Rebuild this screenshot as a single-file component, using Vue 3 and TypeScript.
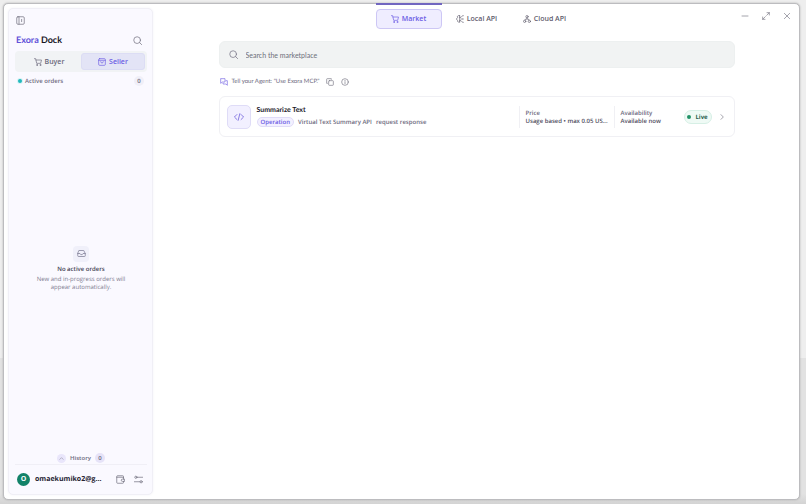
<script setup lang="ts">
import { ref } from 'vue'

type Role = 'buyer' | 'seller'
type Section = 'market' | 'local' | 'cloud'

interface Listing {
  name: string
  kind: string
  provider: string
  mode: string
  price: string
  availability: string
  status: string
}

const role = ref<Role>('seller')
const section = ref<Section>('market')
const query = ref('')

const listings: Listing[] = [
  {
    name: 'Summarize Text',
    kind: 'Operation',
    provider: 'Virtual Text Summary API',
    mode: 'request response',
    price: 'Usage based • max 0.05 US...',
    availability: 'Available now',
    status: 'Live',
  },
]
</script>

<template>
  <div class="desktop">
    <div class="window">
      <aside class="sidebar">
        <button class="icon-btn collapse" type="button" aria-label="Collapse sidebar">
          <svg class="i9" viewBox="0 0 24 24"><rect x="2" y="2" width="20" height="20" rx="3" /><path d="M8 2v20M15 9v6" /></svg>
        </button>

        <div class="brand">
          <h1><span>Exora</span> Dock</h1>
          <button class="icon-btn" type="button" aria-label="Search orders">
            <svg class="i9" viewBox="0 0 24 24"><circle cx="11" cy="11" r="9" /><path d="m18 18 5 5" /></svg>
          </button>
        </div>

        <div class="roles">
          <button type="button" :class="{ active: role === 'buyer' }" @click="role = 'buyer'">
            <svg class="i8" viewBox="0 0 24 24"><circle cx="9" cy="21" r="1.5" /><circle cx="19" cy="21" r="1.5" /><path d="M1 2h4l3 14h12l2.500-10H6" /></svg>
            Buyer
          </button>
          <button type="button" :class="{ active: role === 'seller' }" @click="role = 'seller'">
            <svg class="i8" viewBox="0 0 24 24"><rect x="2" y="2" width="20" height="20" rx="3" /><path d="M2 7h20M8 11a4 4 0 0 0 8 0" /></svg>
            Seller
          </button>
        </div>

        <div class="orders-head">
          <i class="dot"></i><span>Active orders</span><b class="count">0</b>
        </div>

        <div class="empty">
          <div class="empty-icon">
            <svg class="i9" viewBox="0 0 24 24"><path d="M2 12h6l2 3h4l2-3h6M6 4h12l4 8v6a2 2 0 0 1-2 2H4a2 2 0 0 1-2-2v-6z" /></svg>
          </div>
          <strong>No active orders</strong>
          <p>New and in-progress orders will appear automatically.</p>
        </div>

        <button class="history" type="button">
          <i class="up"><svg viewBox="0 0 24 24"><path d="m4 16 8-8 8 8" /></svg></i>
          History <b class="count tinted">0</b>
        </button>

        <footer class="account">
          <span class="avatar">O</span>
          <span class="email">omaekumiko2@g...</span>
          <button class="icon-btn" type="button" aria-label="Wallet">
            <svg class="i9" viewBox="0 0 24 24"><path d="M20 7V4a2 2 0 0 0-2-2H4a2 2 0 0 0-2 2v16a2 2 0 0 0 2 2h14a2 2 0 0 0 2-2v-3M2 6h18v5M22 11h-5a3 3 0 0 0 0 6h5z" /></svg>
          </button>
          <button class="icon-btn" type="button" aria-label="Settings">
            <svg class="i9" viewBox="0 0 24 24"><circle cx="5" cy="6" r="3" /><circle cx="19" cy="18" r="3" /><path d="M8 6h15M1 18h15" /></svg>
          </button>
        </footer>
      </aside>

      <main class="main">
        <header class="topbar">
          <nav class="sections" aria-label="Sections">
            <button type="button" :class="{ active: section === 'market' }" @click="section = 'market'">
              <svg class="i8" viewBox="0 0 24 24"><circle cx="9" cy="21" r="1.500" /><circle cx="19" cy="21" r="1.500" /><path d="M1 2h4l3 14h12l2.500-10H6" /></svg>
              Market
            </button>
            <button type="button" :class="{ active: section === 'local' }" @click="section = 'local'">
              <svg class="i8" viewBox="0 0 24 24"><path d="M11 2C6 0 3 4 5 7c-4 2-4 8 0 10-1 4 3 6 6 4M11 2v19M11 7h4l3-3M15 12h5M11 17h4l3 3" /><path d="M20 2h2M21 12h1M20 22h2" /></svg>
              Local API
            </button>
            <button type="button" :class="{ active: section === 'cloud' }" @click="section = 'cloud'">
              <svg class="i8" viewBox="0 0 24 24"><circle cx="12" cy="5" r="3.500" /><circle cx="5" cy="19" r="3.500" /><circle cx="19" cy="19" r="3.500" /><path d="M12 9v3M6 15l2-3h8l2 3" /></svg>
              Cloud API
            </button>
          </nav>
          <div class="controls">
            <button class="icon-btn" type="button" aria-label="Minimize"><svg class="i8" viewBox="0 0 24 24"><path d="M3 12h18" /></svg></button>
            <button class="icon-btn" type="button" aria-label="Maximize"><svg class="i8" viewBox="0 0 24 24"><path d="M15 2h7v7M22 2l-8 8M9 22H2v-7M2 22l8-8" /></svg></button>
            <button class="icon-btn" type="button" aria-label="Close"><svg class="i8" viewBox="0 0 24 24"><path d="m4 4 16 16M20 4 4 20" /></svg></button>
          </div>
        </header>

        <div class="content">
          <label class="search">
            <svg class="i9" viewBox="0 0 24 24"><circle cx="11" cy="11" r="9" /><path d="m18 18 5 5" /></svg>
            <input v-model="query" type="text" placeholder="Search the marketplace" aria-label="Search the marketplace" />
          </label>

          <div class="hint">
            <svg class="i8 purple" viewBox="0 0 24 24"><path d="M3 2h12v10H7l-5 4V3zM18 8h4v14l-4-4H9v-3" /></svg>
            <span>Tell your Agent: "Use Exora MCP."</span>
            <button class="icon-btn" type="button" aria-label="Copy"><svg class="i8" viewBox="0 0 24 24"><rect x="8" y="8" width="14" height="14" rx="2" /><path d="M4 16H2V4a2 2 0 0 1 2-2h12v2" /></svg></button>
            <button class="icon-btn" type="button" aria-label="About"><svg class="i8" viewBox="0 0 24 24"><circle cx="12" cy="12" r="10" /><path d="M12 11v6M12 7v1" /></svg></button>
          </div>

          <article v-for="item in listings" :key="item.name" class="listing">
            <div class="thumb">
              <svg class="i10" viewBox="0 0 24 24"><path d="m7 6-6 6 6 6M17 6l6 6-6 6M14 4l-4 16" /></svg>
            </div>
            <div class="summary">
              <h2>{{ item.name }}</h2>
              <div class="meta">
                <span class="kind">{{ item.kind }}</span><span>{{ item.provider }}</span><span>{{ item.mode }}</span>
              </div>
            </div>
            <div class="fact price"><span>Price</span><strong>{{ item.price }}</strong></div>
            <div class="fact availability"><span>Availability</span><strong>{{ item.availability }}</strong></div>
            <span class="live"><i></i>{{ item.status }}</span>
            <button class="icon-btn" type="button" aria-label="Open listing"><svg class="i8" viewBox="0 0 24 24"><path d="m9 5 7 7-7 7" /></svg></button>
          </article>
        </div>
      </main>
    </div>
  </div>
</template>

<style>
body {
  background: #ededed;
}
</style>

<style scoped>
* {
  box-sizing: border-box;
}
.desktop {
  height: 100vh;
  padding: 3px 6px 4px 3px;
  background: linear-gradient(#eeeeee 0 71%, #e2e2e2 71% 98%, #d3d3d3);
  font-family: "Open Sans", "Noto Sans", sans-serif;
  font-size: 6px;
  line-height: 8px;
  color: #6d6a7e;
  text-rendering: geometricPrecision;
}
.window {
  display: flex;
  height: 100%;
  border: 1px solid #bcbcbf;
  border-radius: 5px;
  background: #fff;
  box-shadow: 0 0 2px #aaa;
}
h1, h2, p {
  margin: 0;
}
h1, h2, .search, .hint {
  font-family: Lato, "Open Sans", sans-serif;
}
button {
  margin: 0;
  padding: 0;
  border: 0;
  background: none;
  font: inherit;
  color: inherit;
  cursor: pointer;
}
svg {
  flex: none;
  display: block;
  fill: none;
  stroke: currentColor;
  stroke-width: 2;
  stroke-linecap: round;
  stroke-linejoin: round;
}
.i8 {
  width: 8px;
  height: 8px;
}
.i9 {
  width: 9px;
  height: 9px;
}
.i10 {
  width: 10px;
  height: 10px;
}
.icon-btn {
  flex: none;
  color: #777584;
}
.sidebar {
  display: flex;
  flex-direction: column;
  flex: none;
  width: 145px;
  margin: 4px 1px 4px 4px;
  padding: 7px 5px 6px 6px;
  border: 1px solid #f0eff6;
  border-radius: 5px;
  background: #faf9ff;
  box-shadow: 0 0 3px #f3f2f8;
}
.collapse {
  align-self: flex-start;
  margin-left: 1px;
}
.brand {
  display: flex;
  align-items: center;
  justify-content: space-between;
  height: 16px;
  margin: 7px 5px 3px 1px;
}
h1 {
  font-size: 9px;
  line-height: 12px;
  font-weight: 700;
  color: #171525;
}
h1 span {
  color: #6252d9;
}
.roles {
  display: grid;
  grid-template-columns: 1fr 1fr;
  padding: 2px;
  border-radius: 4px;
  background: #f1f3f5;
}
.roles button {
  display: flex;
  align-items: center;
  justify-content: center;
  gap: 3px;
  height: 17px;
  border: 1px solid transparent;
  border-radius: 3px;
  font-size: 7px;
  font-weight: 600;
  color: #69677a;
}
.roles .active {
  border-color: #dcddf4;
  background: #e3e4f6;
  color: #6b5be4;
}
.orders-head {
  display: flex;
  align-items: center;
  gap: 3px;
  margin: 4px 3px 0;
  font-weight: 600;
}
.dot {
  width: 4px;
  height: 4px;
  border-radius: 50%;
  background: #22b9bd;
  box-shadow: 0 0 0 1px #d8f3f6;
}
.count {
  min-width: 10px;
  height: 10px;
  border-radius: 5px;
  background: #f0eff8;
  line-height: 10px;
  text-align: center;
  font-weight: 600;
}
.orders-head .count {
  margin-left: auto;
}
.tinted {
  background: #e6e3f8;
}
.empty {
  display: flex;
  flex: 1;
  flex-direction: column;
  align-items: center;
  justify-content: center;
  padding: 0 20px 3px;
  text-align: center;
}
.empty-icon {
  display: grid;
  place-items: center;
  width: 16px;
  height: 16px;
  margin-bottom: 3px;
  border-radius: 4px;
  background: #f0f0fa;
  color: #7f7d96;
}
.empty strong {
  margin-bottom: 2px;
  font-weight: 600;
  color: #454254;
}
.empty p {
  color: #7f7d90;
}
.history {
  display: flex;
  align-items: center;
  align-self: center;
  gap: 4px;
  font-weight: 600;
}
.up {
  display: grid;
  place-items: center;
  width: 9px;
  height: 9px;
  border-radius: 50%;
  background: #e9e6fb;
}
.up svg {
  width: 5px;
  height: 5px;
}
.account {
  display: flex;
  align-items: center;
  gap: 9px;
  margin-top: 1px;
  padding: 8px 4px 2px 2px;
  border-top: 1px solid #f0eff6;
}
.avatar {
  flex: none;
  width: 13px;
  height: 13px;
  border-radius: 50%;
  background: #128268;
  color: #fff;
  font-size: 7px;
  line-height: 13px;
  font-weight: 700;
  text-align: center;
}
.email {
  flex: 1;
  min-width: 0;
  margin-left: -4px;
  white-space: nowrap;
  font-size: 7px;
  line-height: 10px;
  font-weight: 700;
  color: #252332;
}
.main {
  flex: 1;
  min-width: 0;
}
.topbar {
  display: grid;
  grid-template-columns: 1fr auto 1fr;
  align-items: start;
}
.sections {
  display: grid;
  grid-column: 2;
  grid-template-columns: repeat(3, 66px);
  gap: 2px;
}
.sections button {
  display: flex;
  align-items: center;
  justify-content: center;
  gap: 3px;
  height: 20px;
  margin-top: 5px;
  border: 1px solid transparent;
  border-radius: 4px;
  font-size: 7px;
  font-weight: 600;
  color: #5f5c6d;
}
.sections .active {
  position: relative;
  border-color: #cdc7f5;
  background: #efedff;
  color: #6b5be4;
}
.sections .active::before {
  content: "";
  position: absolute;
  top: -7px;
  right: -1px;
  left: -1px;
  height: 2px;
  background: #7166c0;
}
.controls {
  display: flex;
  justify-content: flex-end;
  gap: 13px;
  padding: 8px 8px 0 0;
}
.content {
  width: 80%;
  margin: 12px auto 0;
}
.search {
  display: flex;
  align-items: center;
  gap: 8px;
  height: 27px;
  padding: 0 9px;
  border: 1px solid #edf0f0;
  border-radius: 6px;
  background: #f1f3f3;
  color: #787687;
}
.search input {
  flex: 1;
  min-width: 0;
  padding: 0;
  border: 0;
  outline: 0;
  background: none;
  font: inherit;
  font-size: 7px;
  color: #33313f;
}
.search input::placeholder {
  color: #6d6f7a;
  opacity: 1;
}
.hint {
  display: flex;
  align-items: center;
  gap: 4px;
  height: 8px;
  margin: 10px 1px;
}
.hint .icon-btn {
  margin-left: 3px;
}
.purple {
  color: #7767e4;
}
.listing {
  display: flex;
  align-items: center;
  height: 41px;
  padding: 0 8px 0 7px;
  border: 1px solid #f0f0f4;
  border-radius: 6px;
}
.thumb {
  display: grid;
  flex: none;
  place-items: center;
  width: 24px;
  height: 24px;
  margin-right: 6px;
  border: 1px solid #dfdcf7;
  border-radius: 5px;
  background: #f2f0ff;
  color: #7464dc;
}
.summary {
  flex: 1;
  min-width: 0;
}
h2 {
  margin-bottom: 2px;
  font-size: 7px;
  line-height: 9px;
  font-weight: 700;
  color: #191727;
}
.meta {
  display: flex;
  align-items: center;
  gap: 4px;
  white-space: nowrap;
  font-weight: 600;
}
.kind {
  padding: 0 3px;
  border: 1px solid #e0dcf8;
  border-radius: 6px;
  background: #f3f0ff;
  color: #6b5be4;
}
.fact {
  flex: none;
  height: 22px;
  padding: 3px 6px;
  border-left: 1px solid #f0f0f4;
  white-space: nowrap;
}
.fact span,
.fact strong {
  display: block;
  font-weight: 600;
}
.fact strong {
  color: #504d60;
}
.price {
  width: 95px;
}
.availability {
  width: 70px;
}
.live {
  display: flex;
  flex: none;
  align-items: center;
  justify-content: center;
  gap: 4px;
  width: 28px;
  height: 14px;
  margin-right: 6px;
  border: 1px solid #d6efe5;
  border-radius: 7px;
  background: #effaf5;
  font-weight: 700;
  color: #28604e;
}
.live i {
  width: 4px;
  height: 4px;
  border-radius: 50%;
  background: #229267;
}
</style>
